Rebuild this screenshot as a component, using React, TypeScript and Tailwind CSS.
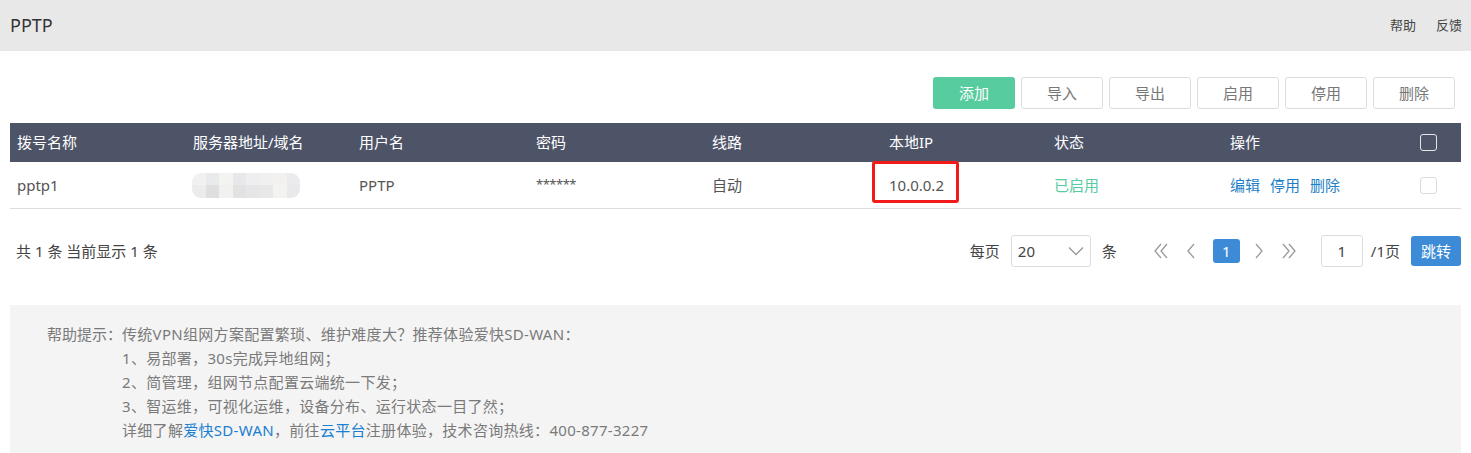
import React from "react";

const font = { fontFamily: '"Noto Sans", "Noto Sans CJK SC", sans-serif' };

const toolbar = ["导入", "导出", "启用", "停用", "删除"];

const columns = ["拨号名称", "服务器地址/域名", "用户名", "密码", "线路", "本地IP", "状态", "操作"];

// pixelated blur blocks over the server address
const blurTop = ["#f1f1f1", "#e9eaec", "#f3f3f2", "#e8e8ea", "#eeeef0", "#f0f0f1", "#f2f1f0", "#ebebed"];
const blurBottom = ["#ececec", "#dfdfdf", "#f1f1f0", "#e2e2e3", "#e5e6e7", "#e8e8e8", "#f3f3f2", "#e9e9eb"];

function Chevron({ dir, double }: { dir: "left" | "right"; double?: boolean }) {
  const one = dir === "left" ? "M9 3 L3 10 L9 17" : "M3 3 L9 10 L3 17";
  const two = dir === "left" ? "M15 3 L9 10 L15 17" : "M9 3 L15 10 L9 17";
  return (
    <svg width={double ? 18 : 12} height="20" viewBox={double ? "0 0 18 20" : "0 0 12 20"} fill="none">
      <path d={one} stroke="#9a9a9a" strokeWidth="1.3" />
      {double && <path d={two} stroke="#9a9a9a" strokeWidth="1.3" />}
    </svg>
  );
}

function Checkbox({ dark }: { dark?: boolean }) {
  return (
    <div
      className={
        dark
          ? "w-[17px] h-[17px] rounded-[3px] border border-[#e6e6e6]"
          : "w-[17px] h-[17px] rounded-[3px] border border-[#dcdcdc] bg-white"
      }
    />
  );
}

export default function App() {
  return (
    <div className="w-full min-h-[453px] bg-white text-[#333]" style={font}>
      <div className="h-[51px] bg-[#e8e8e8] flex items-center justify-between pl-[10px] pr-[9px]">
        <span className="text-[18px] text-[#333]">PPTP</span>
        <div className="flex gap-[20px] text-[13px] text-[#444]">
          <span>帮助</span>
          <span>反馈</span>
        </div>
      </div>

      <div className="px-[10px]">
        <div className="flex justify-end gap-[6px] pt-[26px] pr-[6px]">
          <button className="w-[82px] h-[32px] rounded-[3px] bg-[#57cc9e] text-white text-[15px]">添加</button>
          {toolbar.map((t) => (
            <button
              key={t}
              className="w-[82px] h-[32px] rounded-[3px] border border-[#dcdcdc] bg-white text-[#777] text-[15px]"
            >
              {t}
            </button>
          ))}
        </div>

        <div className="mt-[14px] text-[15px]">
          <div className="grid grid-cols-[176px_166px_177px_176px_177px_165px_176px_177px_1fr] h-[39px] items-center bg-[#4e5468] text-white">
            {columns.map((c) => (
              <div key={c} className="pl-[7px]">
                {c}
              </div>
            ))}
            <div className="flex justify-center pr-[4px]">
              <Checkbox dark />
            </div>
          </div>
          <div className="grid grid-cols-[176px_166px_177px_176px_177px_165px_176px_177px_1fr] h-[47px] items-center border-b border-[#dddddd] text-[#555]">
            <div className="pl-[7px]">pptp1</div>
            <div className="pl-[6px]">
              <div className="w-[108px] h-[25px] rounded-[9px] overflow-hidden grid grid-cols-8 grid-rows-2">
                {blurTop.map((c, i) => (
                  <div key={"t" + i} style={{ background: c }} />
                ))}
                {blurBottom.map((c, i) => (
                  <div key={"b" + i} style={{ background: c }} />
                ))}
              </div>
            </div>
            <div className="pl-[7px]">PPTP</div>
            <div className="pl-[7px] text-[13px] tracking-[-0.5px]">******</div>
            <div className="pl-[7px]">自动</div>
            <div className="pl-[7px] relative">
              10.0.0.2
              <div className="absolute left-[-10px] top-[-13px] w-[87px] h-[42px] border-[3px] border-[#f31a1a] rounded-[3px]" />
            </div>
            <div className="pl-[7px] text-[#57cc9e]">已启用</div>
            <div className="pl-[7px] flex gap-[10px] text-[#1e7fc8]">
              <span>编辑</span>
              <span>停用</span>
              <span>删除</span>
            </div>
            <div className="flex justify-center pr-[4px]">
              <Checkbox />
            </div>
          </div>
        </div>

        <div className="mt-[26px] flex items-center justify-between h-[32px] text-[15px] text-[#444]">
          <span className="pl-[6px]">共 1 条 当前显示 1 条</span>
          <div className="flex items-center">
            <span>每页</span>
            <div className="ml-[11px] w-[80px] h-[32px] border border-[#dcdcdc] rounded-[3px] flex items-center justify-between pl-[6px] pr-[6px]">
              <span>20</span>
              <svg width="16" height="10" viewBox="0 0 16 10" fill="none">
                <path d="M1 1.5 L8 8.5 L15 1.5" stroke="#999" strokeWidth="1.3" />
              </svg>
            </div>
            <span className="ml-[11px]">条</span>
            <div className="ml-[35px]">
              <Chevron dir="left" double />
            </div>
            <div className="ml-[15px]">
              <Chevron dir="left" />
            </div>
            <div className="ml-[16px] w-[27px] h-[24px] rounded-[3px] bg-[#3d8bd6] text-white flex items-center justify-center">
              1
            </div>
            <div className="ml-[13px]">
              <Chevron dir="right" />
            </div>
            <div className="ml-[15px]">
              <Chevron dir="right" double />
            </div>
            <div className="ml-[23px] w-[42px] h-[32px] border border-[#dcdcdc] rounded-[3px] flex items-center justify-center">
              1
            </div>
            <span className="ml-[8px]">/1页</span>
            <button className="ml-[11px] w-[50px] h-[30px] rounded-[3px] bg-[#3d8bd6] text-white text-[15px]">跳转</button>
          </div>
        </div>

        <div className="mt-[38px] bg-[#f4f4f4] pt-[17px] pb-[20px] pl-[37px] text-[15px] leading-[24px] text-[#7a7a7a] flex">
          <span>帮助提示：</span>
          <div className="flex flex-col tracking-[0.3px]">
            <span>传统VPN组网方案配置繁琐、维护难度大？推荐体验爱快SD-WAN：</span>
            <span>1、易部署，30s完成异地组网；</span>
            <span>2、简管理，组网节点配置云端统一下发；</span>
            <span>3、智运维，可视化运维，设备分布、运行状态一目了然；</span>
            <span>
              详细了解<span className="text-[#1a7fd0]">爱快SD-WAN</span>，前往
              <span className="text-[#1a7fd0]">云平台</span>注册体验，技术咨询热线：400-877-3227
            </span>
          </div>
        </div>
      </div>
    </div>
  );
}
